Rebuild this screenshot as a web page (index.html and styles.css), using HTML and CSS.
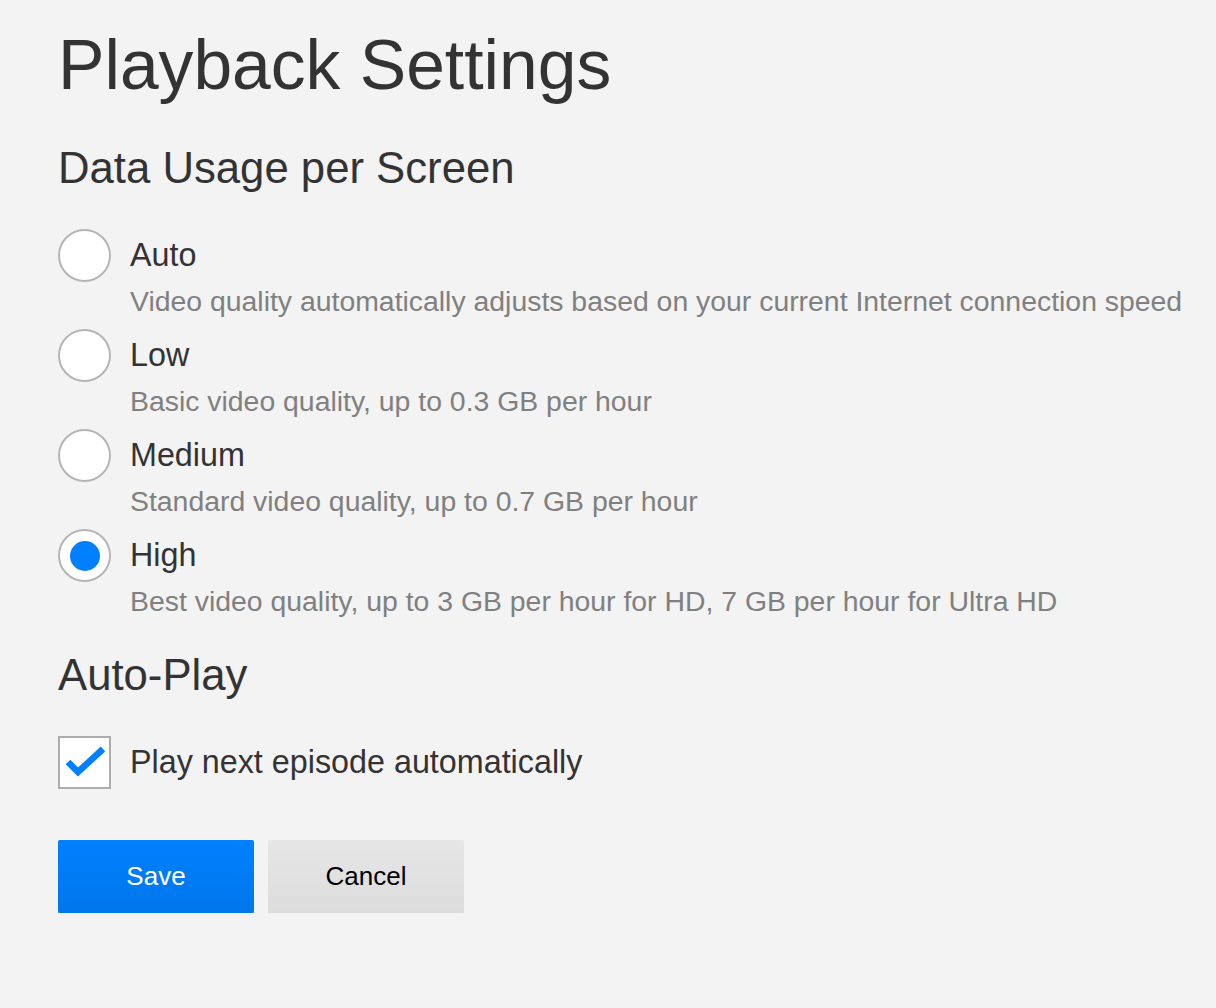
FILE: index.html
```html
<!DOCTYPE html>
<html lang="en">
<head>
<meta charset="utf-8">
<title>Playback Settings</title>
<link rel="stylesheet" href="styles.css">
</head>
<body>
<main class="page">
  <h1 class="title">Playback Settings</h1>

  <section class="section">
    <h2 class="section-title">Data Usage per Screen</h2>
    <ul class="options">
      <li class="option">
        <span class="radio"></span>
        <div class="option-text">
          <div class="option-label">Auto</div>
          <div class="option-desc">Video quality automatically adjusts based on your current Internet connection speed</div>
        </div>
      </li>
      <li class="option">
        <span class="radio"></span>
        <div class="option-text">
          <div class="option-label">Low</div>
          <div class="option-desc">Basic video quality, up to 0.3 GB per hour</div>
        </div>
      </li>
      <li class="option">
        <span class="radio"></span>
        <div class="option-text">
          <div class="option-label">Medium</div>
          <div class="option-desc">Standard video quality, up to 0.7 GB per hour</div>
        </div>
      </li>
      <li class="option">
        <span class="radio radio-checked"></span>
        <div class="option-text">
          <div class="option-label">High</div>
          <div class="option-desc">Best video quality, up to 3 GB per hour for HD, 7 GB per hour for Ultra HD</div>
        </div>
      </li>
    </ul>
  </section>

  <section class="section section-autoplay">
    <h2 class="section-title">Auto-Play</h2>
    <div class="check-row">
      <span class="checkbox">
        <svg class="check-icon" viewBox="0 0 49 49" width="49" height="49" aria-hidden="true">
          <polyline points="8,24 18,34 43,11" fill="none" stroke="#0080ff" stroke-width="6.5" stroke-linejoin="miter" stroke-linecap="butt"/>
        </svg>
      </span>
      <span class="check-label">Play next episode automatically</span>
    </div>
  </section>

  <div class="actions">
    <button class="btn btn-primary" type="button">Save</button>
    <button class="btn btn-secondary" type="button">Cancel</button>
  </div>
</main>
</body>
</html>
```
FILE: styles.css
```css
html, body {
  margin: 0;
  padding: 0;
  background: #f3f3f3;
}

body {
  font-family: "Liberation Sans", Arial, Helvetica, sans-serif;
  color: #333;
}

.page {
  padding: 25px 0 0 58px;
}

.title {
  margin: 0;
  font-size: 69.6px;
  font-weight: 400;
  line-height: 80px;
  color: #333;
}

.section-title {
  margin: 0;
  font-size: 43.7px;
  font-weight: 400;
  line-height: 52px;
  color: #333;
}

.section {
  margin-top: 37px;
}

.section-autoplay {
  margin-top: 20px;
}

.options {
  list-style: none;
  margin: 35px 0 0 0;
  padding: 0;
}

.option {
  display: flex;
  align-items: flex-start;
  gap: 19px;
}

.radio {
  flex: none;
  box-sizing: border-box;
  width: 53px;
  height: 53px;
  border: 2px solid #b5b5b5;
  border-radius: 50%;
  background: #fff;
  display: flex;
  align-items: center;
  justify-content: center;
}

.radio-checked::after {
  content: "";
  width: 30px;
  height: 30px;
  border-radius: 50%;
  background: #0080ff;
}

.option-text {
  display: flex;
  flex-direction: column;
}

.option-label {
  font-size: 32.3px;
  line-height: 53px;
  color: #333;
}

.option-desc {
  font-size: 28.4px;
  line-height: 40px;
  margin-top: -1px;
  margin-bottom: 8px;
  color: #808080;
  white-space: nowrap;
}

.check-row {
  margin-top: 35px;
  display: flex;
  align-items: center;
  gap: 19px;
}

.checkbox {
  flex: none;
  box-sizing: border-box;
  width: 53px;
  height: 53px;
  border: 2px solid #adadad;
  background: #fff;
  display: flex;
  align-items: center;
  justify-content: center;
}

.check-icon {
  display: block;
}

.check-label {
  font-size: 32.3px;
  line-height: 53px;
  color: #333;
}

.actions {
  margin-top: 51px;
  display: flex;
  gap: 14px;
}

.btn {
  width: 196px;
  height: 73px;
  border: none;
  border-radius: 2px;
  font-family: "Liberation Sans", Arial, Helvetica, sans-serif;
  font-size: 26px;
  padding: 0 0 0 0;
  cursor: pointer;
}

.btn-primary {
  background: linear-gradient(#0080ff, #0077ea);
  color: #fff;
  box-shadow: 0 2px 0 #6b6b6b;
}

.btn-secondary {
  background: linear-gradient(#e6e6e6, #dcdcdc);
  color: #000;
  box-shadow: 0 2px 0 #bdbdbd;
}
```
